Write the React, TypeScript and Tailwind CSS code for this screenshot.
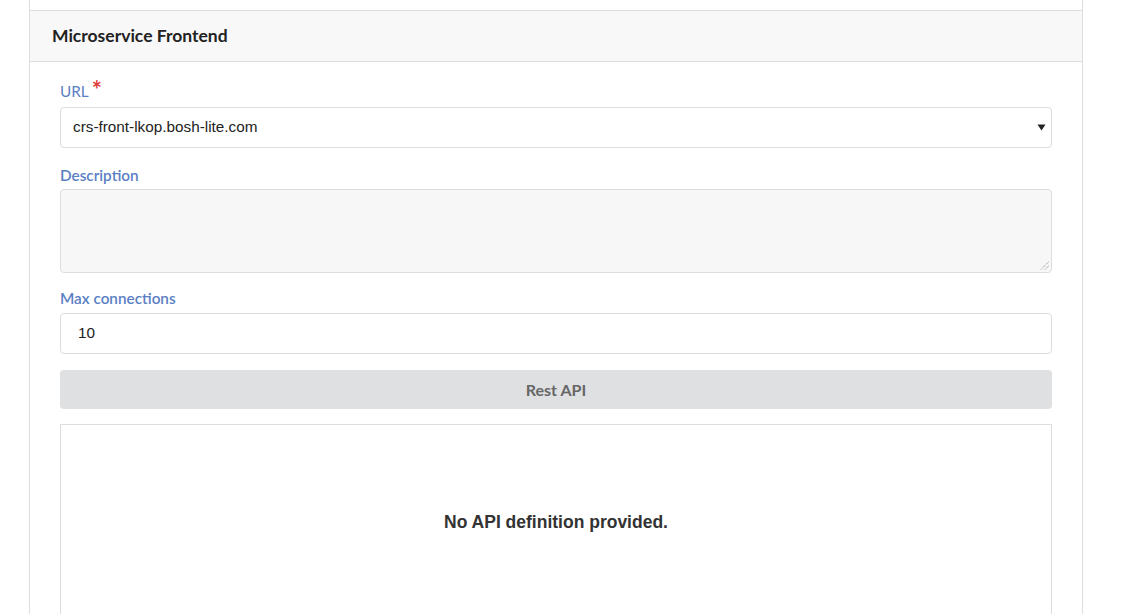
import React from 'react';

function FieldLabel({ text, required }: { text: string; required?: boolean }) {
  return (
    <div className="flex h-5 items-end text-[15.3px] font-semibold leading-5 text-[#5a80c4] [font-family:Lato,sans-serif]">
      <span className={required ? 'font-normal' : ''}>{text}</span>
      {required && <span className="relative top-[1px] ml-[3px] text-[24px] font-bold leading-none text-[#e0403a]">*</span>}
    </div>
  );
}

export default function App() {
  return (
    <div className="h-[614px] overflow-hidden bg-white pl-[29px] pr-[42px]">
      <div className="h-[10px] border-x border-[#dddddd]" />
      <div className="border border-[#dddddd] border-b-0">
        <div className="flex h-[51px] items-center border-b border-[#dddddd] bg-[#f8f8f8] pl-[22px]">
          <h2 className="text-[17.5px] font-bold text-[#222] [font-family:Lato,sans-serif]">Microservice Frontend</h2>
        </div>
        <div className="px-[30px] pt-[19px]">
          <FieldLabel text="URL" required />
          <div className="mt-[6px] flex h-[41px] items-center justify-between rounded border border-[#dddddd] bg-white pl-[12px] pr-[5px] text-[15.3px] text-[#222] [font-family:'Liberation_Sans',Arial,sans-serif]">
            <span>crs-front-lkop.bosh-lite.com</span>
            <svg width="9" height="7" viewBox="0 0 9 7">
              <path d="M0.5 0.5 L8.5 0.5 L4.5 6.5 Z" fill="#222" />
            </svg>
          </div>

          <div className="mt-[17px]">
            <FieldLabel text="Description" />
          </div>
          <div className="relative mt-[4px] h-[84px] rounded border border-[#dddddd] bg-[#f7f7f7]">
            <svg width="9" height="9" viewBox="0 0 9 9" className="absolute bottom-[2px] right-[2px]">
              <path d="M8.5 1 L1 8.5 M8.5 5 L5 8.5" stroke="#777" strokeWidth="1" strokeDasharray="1 1" />
            </svg>
          </div>

          <div className="mt-[15px]">
            <FieldLabel text="Max connections" />
          </div>
          <div className="mt-[5px] flex h-[41px] items-center rounded border border-[#dddddd] bg-white pl-[17px] text-[15.3px] text-[#222] [font-family:'Liberation_Sans',Arial,sans-serif]">
            10
          </div>

          <button className="mt-[16px] flex h-[39px] w-full items-center justify-center rounded bg-[#dfe0e2] text-[16px] font-bold text-[#666] [font-family:Lato,sans-serif]">
            Rest API
          </button>

          <div className="mt-[15px] flex h-[200px] items-start justify-center border border-b-0 border-[#dddddd] pt-[84px]">
            <p className="text-[17.5px] font-bold text-[#333] [font-family:'Liberation_Sans',Arial,sans-serif]">
              No API definition provided.
            </p>
          </div>
        </div>
      </div>
    </div>
  );
}
